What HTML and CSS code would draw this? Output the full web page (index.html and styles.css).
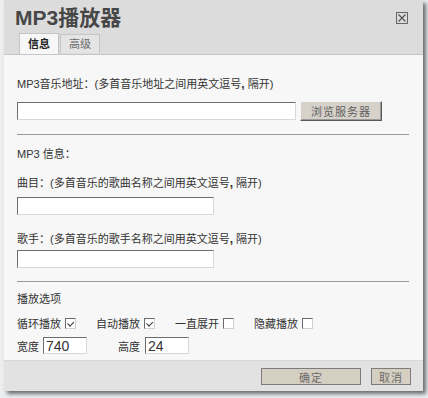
FILE: index.html
```html
<!DOCTYPE html>
<html lang="zh-CN">
<head>
    <meta charset="UTF-8">
    <title>MP3播放器</title>
    <link rel="stylesheet" href="styles.css">
</head>
<body>
    <div class="page">
        <div class="dialog">
            <div class="dialog-header">
                <h1 class="dialog-title">MP3播放器</h1>
                <span class="close-btn">
                    <svg width="12" height="12" viewBox="0 0 12 12">
                        <rect x="0.5" y="0.5" width="11" height="11" fill="none" stroke="#666"/>
                        <path d="M2.5 2.5 L9.5 9.5 M9.5 2.5 L2.5 9.5" stroke="#555" stroke-width="1.2"/>
                    </svg>
                </span>
                <div class="tabs">
                    <span class="tab active">信息</span>
                    <span class="tab">高级</span>
                </div>
            </div>

            <div class="dialog-body">
                <div class="label first">MP3音乐地址：(多首音乐地址之间用英文逗号<b>,</b> 隔开)</div>
                <div class="url-row">
                    <input type="text" class="field url-field">
                    <button type="button" class="browse-btn">浏览服务器</button>
                </div>

                <hr class="sep">

                <div class="label info-title">MP3 信息：</div>
                <div class="label song-label">曲目：(多首音乐的歌曲名称之间用英文逗号<b>,</b> 隔开)</div>
                <input type="text" class="field name-field song-field">
                <div class="label singer-label">歌手：(多首音乐的歌手名称之间用英文逗号<b>,</b> 隔开)</div>
                <input type="text" class="field name-field singer-field">

                <hr class="sep sep-2">

                <div class="label options-title">播放选项</div>
                <div class="check-row">
                    <span class="check-item">循环播放 <span class="checkbox checked"></span></span>
                    <span class="check-item">自动播放 <span class="checkbox checked"></span></span>
                    <span class="check-item">一直展开 <span class="checkbox"></span></span>
                    <span class="check-item">隐藏播放 <span class="checkbox"></span></span>
                </div>
                <div class="size-row">
                    <span class="size-item">宽度 <input type="text" class="field size-field" value="740"></span>
                    <span class="size-item">高度 <input type="text" class="field size-field" value="24"></span>
                </div>
            </div>

            <div class="dialog-footer">
                <button type="button" class="footer-btn ok-btn">确定</button>
                <button type="button" class="footer-btn cancel-btn">取消</button>
            </div>
        </div>
    </div>
</body>
</html>
```

FILE: styles.css
```css
body {
    margin: 0;
    background-color: #eceef0;
    font-family: "Liberation Sans", "Noto Sans CJK SC", sans-serif;
    color: #333;
    font-size: 11px;
}

.page {
    padding-left: 4px;
    height: 398px;
    overflow: hidden;
}

.dialog {
    width: 419px;
    background-color: #f7f7f7;
    box-shadow: 3px 3px 4px rgba(0, 0, 0, 0.55);
}

.dialog-header {
    position: relative;
    height: 54px;
    background-color: #dcdcdc;
    border-bottom: 1px solid #c6c6c6;
    box-sizing: content-box;
}

.dialog-title {
    margin: 0;
    padding: 6px 0 0 11px;
    font-size: 21px;
    line-height: 24px;
    font-weight: bold;
    color: #474747;
}

.close-btn {
    position: absolute;
    top: 12px;
    right: 15px;
    width: 12px;
    height: 12px;
    line-height: 0;
}

.tabs {
    display: flex;
    align-items: flex-end;
    gap: 1px;
    margin: 3px 0 0 15px;
}

.tab {
    height: 18px;
    line-height: 18px;
    padding: 0 8px;
    border: 1px solid #c4c4c4;
    border-bottom: none;
    background-color: #e4e4e4;
    color: #6a6a6a;
}

.tab.active {
    height: 20px;
    line-height: 21px;
    padding: 0 8px;
    background-color: #f7f7f7;
    color: #222;
    font-weight: bold;
    margin-bottom: -1px;
    position: relative;
}

.dialog-body {
    padding: 0 14px 6px 13px;
    overflow: hidden;
}

.label {
    line-height: 16px;
    height: 16px;
    white-space: nowrap;
}

.label b {
    font-weight: bold;
    font-size: 12px;
}

.first {
    margin-top: 21px;
}

.url-row {
    display: flex;
    align-items: center;
    gap: 4px;
    margin-top: 9px;
}

.field {
    box-sizing: border-box;
    height: 18px;
    background-color: #fff;
    border: 1px solid #d8d8d8;
    border-top-color: #6e6e6e;
    border-left-color: #6e6e6e;
    padding: 0 2px;
    font-family: "Liberation Sans", sans-serif;
    font-size: 14px;
    color: #333;
    display: block;
}

.url-field {
    width: 279px;
}

.browse-btn {
    width: 82px;
    height: 20px;
    padding: 0;
    background-color: #d6d2ca;
    border: 1px solid;
    border-color: #f4f4f4 #5a5a5a #5a5a5a #f4f4f4;
    box-shadow: inset -1px -1px 0 #9a9a9a;
    font-family: "Liberation Sans", "Noto Sans CJK SC", sans-serif;
    font-size: 11px;
    color: #5e5e5e;
    letter-spacing: 1px;
}

.sep {
    margin: 13px 0 0;
    border: none;
    border-top: 1px solid #9a9a9a;
    height: 0;
}

.info-title {
    margin-top: 11px;
}

.song-label {
    margin-top: 13px;
}

.name-field {
    width: 197px;
}

.song-field {
    margin-top: 6px;
}

.singer-label {
    margin-top: 16px;
}

.singer-field {
    margin-top: 3px;
}

.options-title {
    margin-top: 9px;
}

.check-row {
    display: flex;
    margin-top: 8px;
    height: 16px;
    align-items: center;
}

.check-item {
    display: flex;
    align-items: center;
    gap: 4px;
    margin-right: 20px;
    white-space: nowrap;
}

.checkbox {
    display: inline-block;
    position: relative;
    width: 11px;
    height: 11px;
    box-sizing: border-box;
    background-color: #fff;
    border: 1px solid #d0d0d0;
    border-top-color: #6a6a6a;
    border-left-color: #6a6a6a;
}

.checkbox.checked::after {
    content: "";
    position: absolute;
    left: 1px;
    top: 0px;
    width: 5px;
    height: 3px;
    border-left: 1px solid #333;
    border-bottom: 1px solid #333;
    transform: rotate(-45deg) translate(-1px, 2px);
}

.size-row {
    display: flex;
    margin-top: 6px;
    gap: 31px;
}

.size-item {
    display: flex;
    align-items: center;
    gap: 4px;
}

.size-field {
    width: 44px;
    height: 17px;
    line-height: 15px;
}

.size-item + .size-item {
    gap: 5px;
}

.dialog-footer {
    display: flex;
    justify-content: flex-end;
    gap: 10px;
    height: 31px;
    padding: 7px 12px 0 0;
    box-sizing: border-box;
    background-color: #e2e2e2;
    border-top: 1px solid #d8d8d8;
}

.footer-btn {
    height: 17px;
    padding: 0;
    background-color: #d5cfc2;
    border: 1px solid #7c7c7c;
    font-family: "Liberation Sans", "Noto Sans CJK SC", sans-serif;
    font-size: 11px;
    color: #6a6a6a;
    letter-spacing: 1px;
}

.ok-btn {
    width: 100px;
}

.cancel-btn {
    width: 40px;
}
```
